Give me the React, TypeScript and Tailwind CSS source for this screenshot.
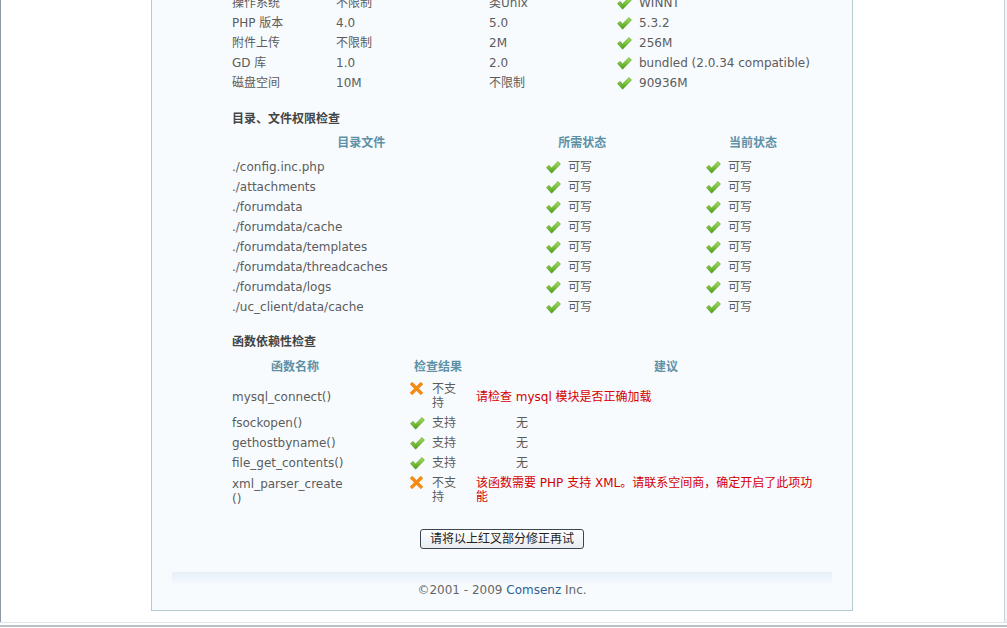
import React from "react";

const envRows = [
  ["操作系统", "不限制", "类Unix", "WINNT"],
  ["PHP 版本", "4.0", "5.0", "5.3.2"],
  ["附件上传", "不限制", "2M", "256M"],
  ["GD 库", "1.0", "2.0", "bundled (2.0.34 compatible)"],
  ["磁盘空间", "10M", "不限制", "90936M"],
];

const dirs = [
  "./config.inc.php",
  "./attachments",
  "./forumdata",
  "./forumdata/cache",
  "./forumdata/templates",
  "./forumdata/threadcaches",
  "./forumdata/logs",
  "./uc_client/data/cache",
];

function Check() {
  return (
    <svg width="15" height="13" viewBox="0 0 15 13" className="shrink-0">
      <defs>
        <linearGradient id="ck" x1="0" y1="0" x2="0" y2="1">
          <stop offset="0" stopColor="#a6e35a" />
          <stop offset="1" stopColor="#4c9f16" />
        </linearGradient>
      </defs>
      <path
        d="M0.6 6.6 L3 4.4 L5.6 6.9 L12 0.6 L14.4 3 L5.6 12.2 Z"
        fill="url(#ck)"
        stroke="#4a8f1c"
        strokeWidth="0.6"
        strokeLinejoin="round"
      />
    </svg>
  );
}

function Cross() {
  return (
    <svg width="13" height="13" viewBox="0 0 13 13" className="shrink-0">
      <path d="M2.2 2.2 L10.8 10.8 M10.8 2.2 L2.2 10.8" stroke="#f38b14" strokeWidth="3.4" strokeLinecap="square" />
    </svg>
  );
}

function SectionTitle({ children }: { children: React.ReactNode }) {
  return <div className="h-[20px] leading-[20px] font-bold text-[#444]">{children}</div>;
}

export default function App() {
  return (
    <div
      className="w-[1007px] h-[628px] overflow-hidden bg-white flex flex-col text-[12px] text-[#5c5c5c]"
      style={{ fontFamily: '"DejaVu Sans", "Noto Sans CJK SC", sans-serif' }}
    >
      <div className="flex h-[622px] overflow-hidden border-l border-[#8f9aa6]">
        <div className="flex-1 overflow-hidden">
          <div className="ml-[150px] w-[702px] -mt-[8px] border border-[#b6cacf] bg-[#f7fbfe] px-[20px]">
            <div className="pl-[60px]">
              {/* environment */}
              <div>
                {envRows.map((r) => (
                  <div key={r[0]} className="flex h-[20px] items-center">
                    <div className="w-[104px]">{r[0]}</div>
                    <div className="w-[153px]">{r[1]}</div>
                    <div className="w-[128px]">{r[2]}</div>
                    <Check />
                    <div className="pl-[7px]">{r[3]}</div>
                  </div>
                ))}
              </div>

              <div className="mt-[16px]">
                <SectionTitle>目录、文件权限检查</SectionTitle>
              </div>
              <div className="flex h-[20px] items-center mt-[4px] font-bold text-[#5e91a6]">
                <div className="w-[262px] text-center">目录文件</div>
                <div className="w-[186px] text-center">所需状态</div>
                <div className="w-[160px] text-center">当前状态</div>
              </div>
              <div className="mt-[4px]">
                {dirs.map((d) => (
                  <div key={d} className="flex h-[20px] items-center">
                    <div className="w-[314px]">{d}</div>
                    <div className="w-[160px] flex items-center gap-[7px]">
                      <Check />
                      <span>可写</span>
                    </div>
                    <div className="flex items-center gap-[7px]">
                      <Check />
                      <span>可写</span>
                    </div>
                  </div>
                ))}
              </div>

              <div className="mt-[15px]">
                <SectionTitle>函数依赖性检查</SectionTitle>
              </div>
              <div className="flex h-[20px] items-center mt-[5px] font-bold text-[#5e91a6]">
                <div className="w-[126px] text-center">函数名称</div>
                <div className="w-[160px] text-center">检查结果</div>
                <div className="w-[296px] text-center">建议</div>
              </div>
              <div className="mt-[2px] leading-[14px]">
                <div className="flex items-center py-[3px]">
                  <div className="w-[178px] pt-[1px]">mysql_connect()</div>
                  <div className="w-[66px] flex items-start gap-[9px] self-start">
                    <Cross />
                    <span>
                      不支
                      <br />
                      持
                    </span>
                  </div>
                  <div className="text-[#d40000] pt-[1px]">请检查 mysql 模块是否正确加载</div>
                </div>
                {["fsockopen()", "gethostbyname()", "file_get_contents()"].map((f) => (
                  <div key={f} className="flex items-center py-[3px]">
                    <div className="w-[178px]">{f}</div>
                    <div className="w-[66px] flex items-center gap-[7px]">
                      <Check />
                      <span>支持</span>
                    </div>
                    <div className="pl-[40px]">无</div>
                  </div>
                ))}
                <div className="flex items-start py-[3px]">
                  <div className="w-[178px] leading-[15px] pt-[1px]">
                    xml_parser_create
                    <br />
                    ()
                  </div>
                  <div className="w-[66px] flex items-start gap-[9px]">
                    <Cross />
                    <span>
                      不支
                      <br />
                      持
                    </span>
                  </div>
                  <div className="w-[344px] text-[#d40000]">
                    该函数需要 PHP 支持 XML。请联系空间商，确定开启了此项功
                    <br />
                    能
                  </div>
                </div>
              </div>
            </div>

            <div className="flex justify-center mt-[19px]">
              <button
                type="button"
                className="h-[20px] w-[164px] rounded-[3px] border border-[#3c4650] bg-gradient-to-b from-white to-[#e8edf1] text-[12px] leading-[16px] text-[#222]"
              >
                请将以上红叉部分修正再试
              </button>
            </div>

            <div className="mt-[23px] h-[11px] bg-gradient-to-b from-[#e6f0f9] to-[#f3f8fd]" />
            <div className="h-[14px] leading-[14px] text-center text-[#666]">
              ©2001 - 2009 <span className="text-[#2f5f93]">Comsenz</span> Inc.
            </div>
            <div className="h-[13px]" />
          </div>
        </div>
        <div className="w-[3px] border-l border-[#c9d0d6] bg-[#f2f4f6]" />
      </div>
      <div className="h-[6px] border-t border-[#e1e6ea] flex flex-col">
        <div className="h-[2px]" />
        <div className="h-[2px] bg-[#b9c2c9]" />
      </div>
    </div>
  );
}
